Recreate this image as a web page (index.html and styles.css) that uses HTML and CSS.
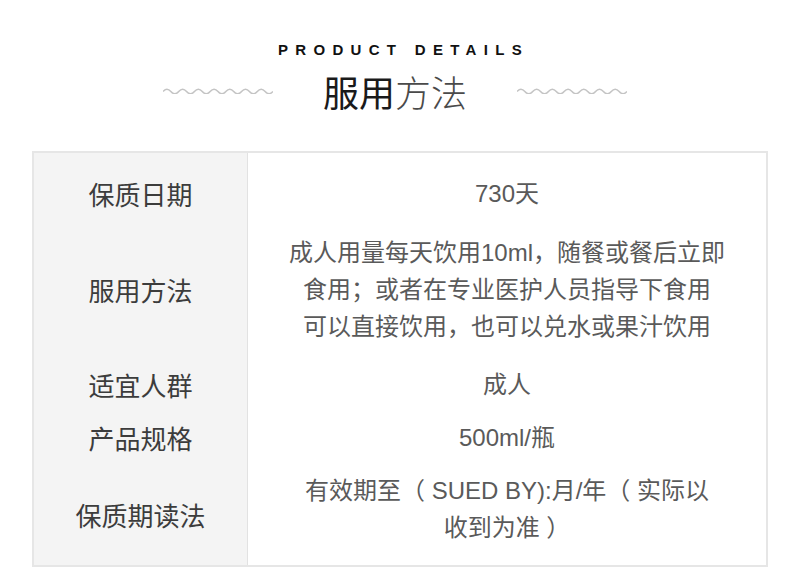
FILE: index.html
```html
<!DOCTYPE html>
<html lang="zh-CN">
<head>
<meta charset="utf-8">
<title>服用方法</title>
<link rel="stylesheet" href="styles.css">
</head>
<body>
<header class="head">
  <div class="eyebrow">PRODUCT DETAILS</div>
  <div class="title-row">
    <svg class="wave" width="110" height="8" viewBox="0 0 110 8"><path d="M0 5.5 Q3.93 1 7.86 5.5 T15.71 5.5 T23.57 5.5 T31.43 5.5 T39.29 5.5 T47.14 5.5 T55 5.5 T62.86 5.5 T70.71 5.5 T78.57 5.5 T86.43 5.5 T94.29 5.5 T102.14 5.5 T110 5.5" /></svg>
    <h1 class="title"><span class="strong">服用</span><span class="light">方法</span></h1>
    <svg class="wave" width="110" height="8" viewBox="0 0 110 8"><path d="M0 5.5 Q3.93 1 7.86 5.5 T15.71 5.5 T23.57 5.5 T31.43 5.5 T39.29 5.5 T47.14 5.5 T55 5.5 T62.86 5.5 T70.71 5.5 T78.57 5.5 T86.43 5.5 T94.29 5.5 T102.14 5.5 T110 5.5" /></svg>
  </div>
</header>
<section class="spec">
  <div class="label r1">保质日期</div>
  <div class="value r1">730天</div>

  <div class="label r2">服用方法</div>
  <div class="value r2">成人用量每天饮用10ml，随餐或餐后立即<br>食用；或者在专业医护人员指导下食用<br>可以直接饮用，也可以兑水或果汁饮用</div>

  <div class="label r3">适宜人群</div>
  <div class="value r3">成人</div>

  <div class="label r4">产品规格</div>
  <div class="value r4">500ml/瓶</div>

  <div class="label r5">保质期读法</div>
  <div class="value r5">有效期至（ SUED BY):月/年（ 实际以<br>收到为准 ）</div>
</section>
</body>
</html>
```
FILE: styles.css
```css
html, body {
  margin: 0;
  padding: 0;
  background: #fff;
}
body {
  width: 800px;
  height: 568px;
  overflow: hidden;
  font-family: "Liberation Sans", "Noto Sans CJK SC", sans-serif;
}
.head {
  padding-top: 42px;
  display: flex;
  flex-direction: column;
  align-items: center;
}
.eyebrow {
  font-family: "Liberation Sans", sans-serif;
  font-weight: 700;
  font-size: 15px;
  line-height: 16px;
  letter-spacing: 7.3px;
  padding-left: 7px;
  color: #111;
}
.title-row {
  margin-top: 11px;
  padding-right: 10px;
  display: flex;
  align-items: center;
  justify-content: center;
  gap: 50px;
}
.wave {
  display: block;
  margin-top: -2px;
}
.wave path {
  fill: none;
  stroke: #c4c4c4;
  stroke-width: 1.5;
}
.title {
  margin: 0;
  font-family: "Noto Sans CJK SC", sans-serif;
  font-size: 36px;
  line-height: 44px;
  font-weight: 400;
  letter-spacing: 0;
}
.title .strong {
  color: #1a1a1a;
  font-weight: 400;
}
.title .light {
  color: #4a4a4a;
  font-weight: 300;
}
.spec {
  margin: 38px 32px 0;
  border: 2px solid #e6e6e6;
  display: grid;
  grid-template-columns: 214px 1fr;
  grid-template-rows: 80px 125px 52px 54px 101px;
}
.label {
  background: #f4f4f4;
  border-right: 1px solid #e2e2e2;
  display: flex;
  align-items: center;
  justify-content: center;
  font-family: "Noto Sans CJK SC", sans-serif;
  font-size: 26px;
  color: #3c3c3c;
}
.value {
  display: flex;
  align-items: center;
  justify-content: center;
  text-align: center;
  font-size: 24px;
  line-height: 37px;
  color: #5a5a5a;
}
.label.r2, .value.r2 {
  padding-bottom: 13px;
}
.value.r5 {
  padding-bottom: 12px;
}
```
